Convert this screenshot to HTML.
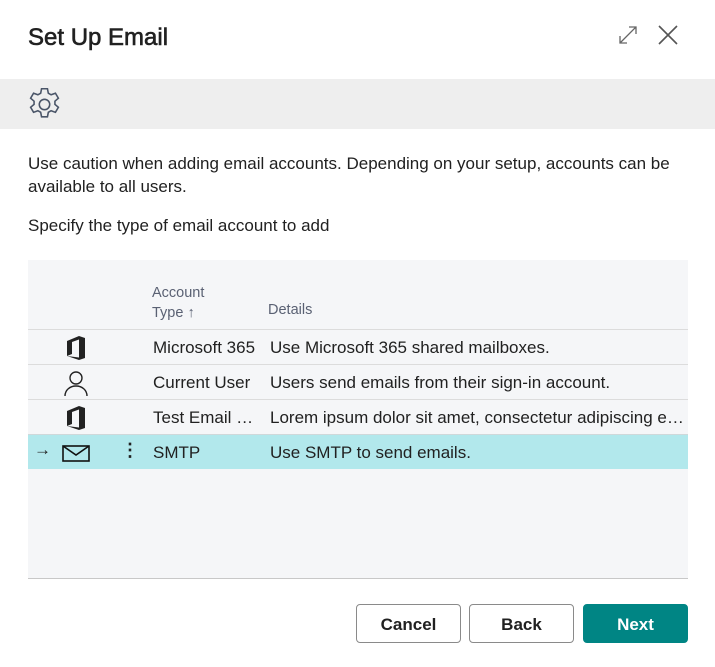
<!DOCTYPE html>
<html><head><meta charset="utf-8"><style>
*{margin:0;padding:0;box-sizing:border-box}
body{width:715px;height:667px;background:#fff;font-family:"Segoe UI","Liberation Sans",sans-serif;color:#212121;position:relative;overflow:hidden}
.abs{position:absolute}
h1{position:absolute;left:28px;top:24px;font-size:24px;font-weight:400;-webkit-text-stroke:0.6px #212121;color:#212121}
.bar{left:0;top:79px;width:715px;height:50px;background:#eeeeee}
.t{font-size:17px;white-space:nowrap}
.grid{left:28px;top:260px;width:660px;height:319px;background:#f5f6f8;border-bottom:1px solid #c8c8c8}
.row{position:absolute;left:0;width:660px;height:35px;border-top:1px solid #dcdcdc}
.row .c{position:absolute;top:8px;font-size:17px;white-space:nowrap;overflow:hidden;color:#212121}
.hd{font-size:14.5px;color:#5a6173;position:absolute}
.btn{position:absolute;top:604px;height:39px;border:1px solid #8a8a8a;border-radius:4px;background:#fff;font-size:17px;font-weight:600;text-align:center;line-height:39px;color:#212121}
</style></head><body>
<h1>Set Up Email</h1>
<svg class="abs" style="left:617px;top:24px" width="22" height="22" viewBox="0 0 22 22" fill="none" stroke="#666" stroke-width="1.3"><path d="M3 19L19 3M12 3h7v7M3 12v7h7"/></svg>
<svg class="abs" style="left:656px;top:23px" width="24" height="24" viewBox="0 0 24 24" stroke="#555" stroke-width="1.6"><path d="M3 3L21 21M21 3L3 21"/></svg>
<div class="abs bar"></div>
<svg class="abs" style="left:28px;top:88px" width="33" height="33" viewBox="2.5 2.5 19 19" fill="none" stroke="#4a5568" stroke-width="0.9"><circle cx="12" cy="12" r="3"/><path d="M10.3 2.9h3.4l.5 2.6 1.6.9 2.5-.9 1.7 2.9-2 1.7v1.8l2 1.7-1.7 2.9-2.5-.9-1.6.9-.5 2.6h-3.4l-.5-2.6-1.6-.9-2.5.9-1.7-2.9 2-1.7v-1.8l-2-1.7 1.7-2.9 2.5.9 1.6-.9z"/></svg>
<div class="abs t" style="left:28px;top:154px">Use caution when adding email accounts. Depending on your setup, accounts can be</div>
<div class="abs t" style="left:28px;top:177px">available to all users.</div>
<div class="abs t" style="left:28px;top:216px">Specify the type of email account to add</div>
<div class="abs grid">
 <div class="hd" style="left:124px;top:23px;line-height:20px">Account<br>Type ↑</div>
 <div class="hd" style="left:240px;top:42px">Details</div>
 <div class="row" style="top:69px">
  <svg class="abs" style="left:37px;top:5px" width="22" height="26" viewBox="0 0 22 26" fill="#222"><path d="M2 6L14 1l6 2v20l-6 2-12-4 12 1.5V4.5L7 7v12l-5 2z"/></svg>
  <div class="c" style="left:125px">Microsoft 365</div><div class="c" style="left:242px">Use Microsoft 365 shared mailboxes.</div></div>
 <div class="row" style="top:104px">
  <svg class="abs" style="left:36px;top:4px" width="24" height="28" viewBox="0 0 24 28" fill="none" stroke="#222" stroke-width="1.4"><circle cx="12" cy="9" r="6"/><path d="M1 27c0-6 5-10 11-10s11 4 11 10"/></svg>
  <div class="c" style="left:125px">Current User</div><div class="c" style="left:242px">Users send emails from their sign-in account.</div></div>
 <div class="row" style="top:139px">
  <svg class="abs" style="left:37px;top:5px" width="22" height="26" viewBox="0 0 22 26" fill="#222"><path d="M2 6L14 1l6 2v20l-6 2-12-4 12 1.5V4.5L7 7v12l-5 2z"/></svg>
  <div class="c" style="left:125px;width:108px;text-overflow:ellipsis">Test Email C…</div><div class="c" style="left:242px;width:415px;text-overflow:ellipsis">Lorem ipsum dolor sit amet, consectetur adipiscing elit, sed do</div></div>
 <div class="row" style="top:174px;background:#b2e8ec;border-top:1px solid #cfd8da">
  <div class="c" style="left:6px;top:5px;font-size:17px">→</div>
  <svg class="abs" style="left:34px;top:10px" width="28" height="17" viewBox="0 0 28 17" fill="none" stroke="#111" stroke-width="1.6"><rect x="1" y="1" width="26" height="15"/><path d="M1 1l13 9 13-9"/></svg>
  <div class="c" style="left:93px;top:5px;font-size:18px;font-weight:bold">⋮</div>
  <div class="c" style="left:125px">SMTP</div><div class="c" style="left:242px">Use SMTP to send emails.</div></div>
</div>
<div class="btn" style="left:356px;width:105px">Cancel</div>
<div class="btn" style="left:469px;width:105px">Back</div>
<div class="btn" style="left:583px;width:105px;background:#008584;border-color:#008584;color:#fff">Next</div>
</body></html>
